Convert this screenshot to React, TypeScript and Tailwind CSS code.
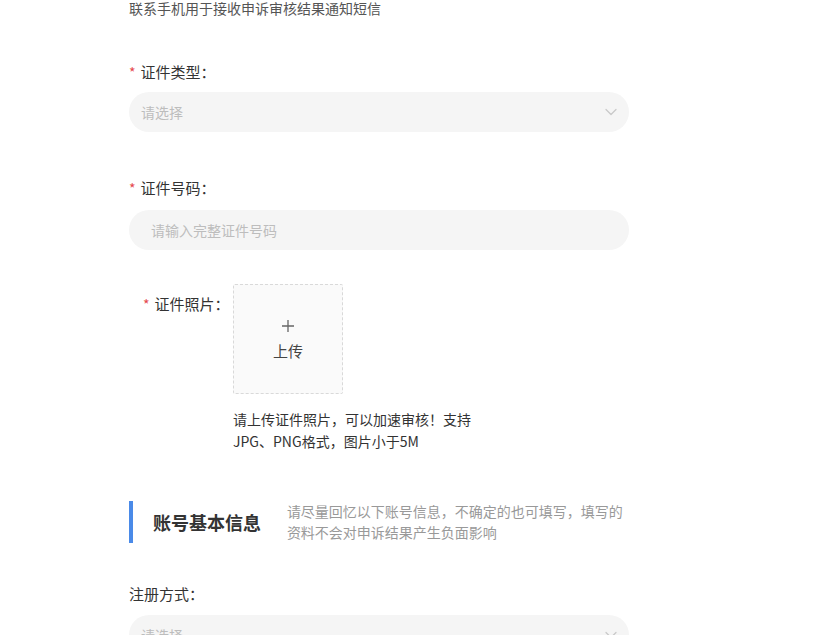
import React from 'react';

const font = { fontFamily: '"Noto Sans CJK SC", "Noto Sans", sans-serif' };

const Required = () => <span className="text-[#e5484d] mr-[5px] text-[14px]">*</span>;

const Chevron = () => (
  <svg width="12" height="8" viewBox="0 0 12 8" fill="none" className="text-[#c8c8c8]">
    <path d="M1 1.5L6 6.5L11 1.5" stroke="currentColor" strokeWidth="1.2" strokeLinecap="round" strokeLinejoin="round" />
  </svg>
);

const SelectBox: React.FC<{ placeholder: string }> = ({ placeholder }) => (
  <div className="h-10 w-[500px] rounded-full bg-[#f5f5f5] flex items-center justify-between pl-3 pr-[12px]">
    <span className="text-[14px] text-[#bdbdbd]">{placeholder}</span>
    <Chevron />
  </div>
);

const App: React.FC = () => {
  return (
    <div className="min-h-screen bg-white overflow-hidden" style={font}>
      <div className="w-[500px] ml-[129px] text-[#333]">
        {/* 手机说明 */}
        <p className="text-[14px] leading-4 text-[#555]">联系手机用于接收申诉审核结果通知短信</p>

        {/* 证件类型 */}
        <div className="mt-[45px]">
          <div className="text-[15px] leading-[22px] mb-[9px] flex items-center">
            <Required />证件类型：
          </div>
          <SelectBox placeholder="请选择" />
        </div>

        {/* 证件号码 */}
        <div className="mt-[45px]">
          <div className="text-[15px] leading-[22px] mb-[11px] flex items-center">
            <Required />证件号码：
          </div>
          <div className="h-10 w-[500px] rounded-full bg-[#f5f5f5] flex items-center pl-[22px]">
            <span className="text-[14px] text-[#bdbdbd]">请输入完整证件号码</span>
          </div>
        </div>

        {/* 证件照片 */}
        <div className="mt-[34px] flex">
          <div className="w-[104px] pl-[14px] pt-[9px] text-[15px] leading-[22px] flex items-start">
            <Required />证件照片：
          </div>
          <div>
            <div className="w-[110px] h-[110px] border border-dashed border-[#d9d9d9] rounded-[2px] bg-[#fafafa] flex flex-col items-center justify-center">
              <svg width="14" height="14" viewBox="0 0 14 14" className="mt-[2px]">
                <path d="M7 1v12M1 7h12" stroke="#666" strokeWidth="1.3" />
              </svg>
              <span className="text-[15px] text-[#444] mt-[8px] leading-5">上传</span>
            </div>
            <p className="mt-[14px] text-[14px] leading-[22px] text-[#333] w-[250px]">
              请上传证件照片，可以加速审核！支持
              <br />
              JPG、PNG格式，图片小于5M
            </p>
          </div>
        </div>

        {/* 账号基本信息 */}
        <div className="mt-[49px] flex items-center h-[42px] border-l-4 border-[#4a8ae8]">
          <h2 className="ml-5 text-[18px] font-bold text-[#333] w-[135px] leading-6">账号基本信息</h2>
          <p className="text-[14px] leading-[21px] text-[#999] w-[345px]">
            请尽量回忆以下账号信息，不确定的也可填写，填写的资料不会对申诉结果产生负面影响
          </p>
        </div>

        {/* 注册方式 */}
        <div className="mt-[40px]">
          <div className="text-[15px] leading-[22px] mb-[10px]">注册方式：</div>
          <SelectBox placeholder="请选择" />
        </div>
      </div>
    </div>
  );
};

export default App;
